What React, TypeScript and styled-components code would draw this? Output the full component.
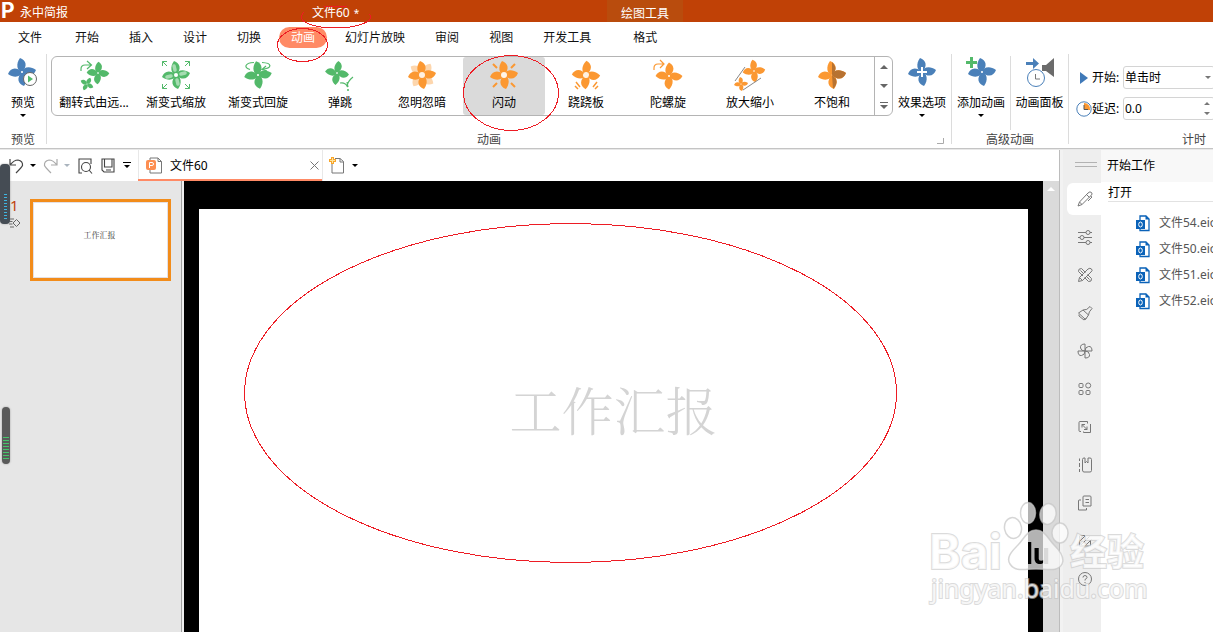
import React from "react";
import styled, { createGlobalStyle } from "styled-components";

const GlobalStyle = createGlobalStyle`
  * { box-sizing: border-box; }
  body {
    margin: 0;
    background: #fff;
    color: #000;
    font: 12px/16px "Noto Sans", "Noto Sans CJK SC", sans-serif;
  }
  button, input, select {
    font: inherit;
    color: inherit;
    border: 0;
    padding: 0;
    margin: 0;
    background: none;
  }
  a { color: inherit; text-decoration: none; }
  svg { display: block; flex: none; }
`;

const Page = styled.div`
  position: relative;
  display: flex;
  flex-direction: column;
  min-height: 100vh;
  overflow: hidden;
  white-space: nowrap;
`;

/* ---------- title bar ---------- */

const TitleBar = styled.header`
  display: flex;
  height: 22px;
  background: #c04106;
  color: #fff;
`;
const Brand = styled.div`
  display: flex;
  flex: none;
  width: 312px;
  padding-left: 1px;
  gap: 4px;
  line-height: 25px;
`;
const BrandMark = styled.span`
  width: 15px;
  font: 700 21px/22px Inter, sans-serif;
`;
const DocName = styled.div`
  flex: none;
  width: 295px;
  line-height: 25px;
`;
const Dirty = styled.span`
  margin-left: 4px;
  font-size: 10px;
`;
const ContextTab = styled.div`
  width: 76px;
  line-height: 27px;
  text-align: center;
  background: #b94c0d;
`;

/* ---------- menu ---------- */

const Menu = styled.nav`
  display: flex;
  height: 32px;
  padding: 5px 0 0 6px;
`;
const MenuItem = styled.button<{ $active?: boolean; $gap?: number }>`
  flex: none;
  height: 21px;
  padding: 0 12px;
  margin-right: ${(p) => p.$gap ?? 6}px;
  border-radius: 11px;
  background: ${(p) => (p.$active ? "#ff8a65" : "transparent")};
  color: ${(p) => (p.$active ? "#fff" : "#111")};
`;

/* ---------- ribbon ---------- */

const Ribbon = styled.section`
  display: flex;
  align-items: flex-start;
  height: 96px;
  border-bottom: 1px solid #e8e8e8;
  box-shadow: inset 0 -1px #c4c4c4;
`;
const Group = styled.div<{ $width?: number }>`
  flex: none;
  width: ${(p) => (p.$width ? `${p.$width}px` : "auto")};
`;
const GroupBody = styled.div<{ $left?: number }>`
  display: flex;
  height: 78px;
  padding: 2px 0 0 ${(p) => p.$left ?? 0}px;
`;
const GroupLabel = styled.div`
  display: flex;
  text-align: center;
  color: #444;
  span { flex: 1; }
`;
const Launcher = styled.button`
  width: 20px;
  height: 16px;
  padding-left: 6px;
`;
const Divider = styled.div<{ $height?: number }>`
  flex: none;
  width: 1px;
  height: ${(p) => p.$height ?? 90}px;
  background: #dcdcdc;
`;
const BigButton = styled.button<{ $width?: number }>`
  display: flex;
  flex-direction: column;
  align-items: center;
  flex: none;
  width: ${(p) => p.$width ?? 58}px;
  height: 66px;
  svg + span { margin-top: 7px; }
  span + svg { margin-top: 3px; }
`;
const Gallery = styled.div`
  display: flex;
  flex: none;
  height: 60px;
  padding-left: 1px;
  border: 1px solid #b4b4b4;
  border-radius: 6px;
`;
const GalleryItem = styled.button<{ $active?: boolean }>`
  display: flex;
  flex-direction: column;
  align-items: center;
  gap: 4px;
  width: 82px;
  height: 58px;
  padding-top: 2px;
  border-radius: 3px;
  background: ${(p) => (p.$active ? "#dadada" : "transparent")};
`;
const GalleryScroll = styled.div`
  display: flex;
  flex-direction: column;
  width: 18px;
  margin-left: 1px;
  border-left: 1px solid #b4b4b4;
  button {
    display: flex;
    flex: 1;
    align-items: center;
    justify-content: center;
  }
`;
const Timing = styled.div`
  display: flex;
  flex-direction: column;
  gap: 8px;
  padding: 10px 0 0 6px;
`;
const TimingRow = styled.div`
  display: flex;
  align-items: center;
  height: 23px;
  label { width: 31px; }
`;
const TimingIcon = styled.span`
  display: flex;
  justify-content: center;
  width: 17px;
`;
const FieldBox = styled.span`
  display: flex;
  align-items: center;
  width: 92px;
  height: 23px;
  padding: 0 3px 0 1px;
  border: 1px solid #d4d4d4;
  border-radius: 3px;
  select, input {
    flex: 1;
    min-width: 0;
    height: 20px;
    appearance: none;
    outline: none;
  }
`;

/* ---------- work area ---------- */

const Body = styled.div`
  display: flex;
  flex: 1;
`;
const Editor = styled.main`
  display: flex;
  flex-direction: column;
  flex: 1;
  min-width: 0;
`;
const QuickBar = styled.div`
  display: flex;
  align-items: center;
  height: 31px;
  padding-left: 8px;
`;
const IconButton = styled.button<{ $width?: number }>`
  display: flex;
  align-items: center;
  justify-content: center;
  flex: none;
  width: ${(p) => p.$width ?? 16}px;
  height: 24px;
`;
const QuickTools = styled.div`
  display: flex;
  align-items: center;
  width: 130px;
  gap: 3px;
`;
const DocTab = styled.div`
  display: flex;
  align-items: center;
  flex: none;
  width: 184px;
  height: 31px;
  padding: 2px 0 0 8px;
  border-bottom: 2px solid #ff8a65;
  box-shadow: inset 1px 0 #e8e8e8, 1px 0 #e8e8e8;
  svg { margin-right: 7px; }
  span { flex: 1; }
  button svg { margin: 0; }
`;
const Work = styled.div`
  display: flex;
  flex: 1;
`;
const Thumbs = styled.div`
  display: flex;
  flex: none;
  align-items: flex-start;
  width: 184px;
  padding: 18px 0 0 9px;
  background: #e6e6e6;
  box-shadow: inset -2px 0 #efefef, inset -3px 0 #a0a0a0;
`;
const ThumbInfo = styled.div`
  width: 21px;
  color: #c0430a;
  font-size: 15px;
  line-height: 12px;
  svg { margin-top: 7px; }
  span { padding-left: 1px; }
`;
const Thumb = styled.button`
  width: 141px;
  height: 82px;
  padding: 0 2px 10px 0;
  border: 3px solid #f28c1a;
  background: #fff;
  box-shadow: inset 0 0 0 1px #e4e0e4;
  color: #333;
  font: 8px/12px "Noto Serif CJK SC", "Noto Sans CJK SC", serif;
`;
const Stage = styled.div`
  display: flex;
  flex: 1;
  min-width: 0;
  padding: 28px 15px 0;
  background: #000;
`;
const Slide = styled.section`
  flex: 1;
  padding-top: 170px;
  background: #fff;
  text-align: center;
`;
const SlideTitle = styled.h1`
  margin: 0;
  color: #d4d4d4;
  font: 300 52px/60px "Noto Serif CJK SC", "Noto Sans CJK SC", serif;
`;
const ScrollTrack = styled.div`
  flex: none;
  width: 16px;
  padding: 6px 0 0 4px;
  background: #dadada;
`;

/* ---------- side pane ---------- */

const Side = styled.aside`
  display: flex;
  flex: none;
  width: 154px;
  border-left: 1px solid #bcbcbc;
`;
const ToolStrip = styled.div`
  display: flex;
  flex-direction: column;
  align-items: flex-end;
  gap: 6px;
  flex: none;
  width: 41px;
  background: #eee;
  border-left: 3px solid #f2f2f2;
`;
const Grip = styled.div`
  width: 22px;
  height: 5px;
  margin: 12px 4px 10px 0;
  border: solid #b2b2b2;
  border-width: 1px 0;
`;
const ToolTile = styled.button<{ $active?: boolean }>`
  display: flex;
  align-items: center;
  justify-content: center;
  width: 34px;
  height: 32px;
  padding-left: 2px;
  border-radius: 6px 0 0 6px;
  background: ${(p) => (p.$active ? "#fff" : "transparent")};
`;
const Panel = styled.div`
  flex: 1;
  min-width: 0;
  overflow: hidden;
`;
const PanelHead = styled.h2`
  margin: 0;
  height: 32px;
  padding: 8px 0 0 6px;
  background: #f8f8f8;
  font: inherit;
`;
const PanelSub = styled.h3`
  margin: 0 0 8px 7px;
  height: 20px;
  padding-top: 3px;
  border-bottom: 1px solid #e2e2e2;
  font: inherit;
`;
const FileLink = styled.a`
  display: flex;
  align-items: center;
  gap: 9px;
  height: 26px;
  padding-left: 35px;
  color: #555;
`;

/* ---------- overlays ---------- */

const Mark = styled.svg`
  position: absolute;
  inset: 0;
  pointer-events: none;
`;
const Meter = styled.div<{ $top: number; $left: number; $width: number; $height: number; $color: string; $lit: string }>`
  position: absolute;
  top: ${(p) => p.$top}px;
  left: ${(p) => p.$left}px;
  width: ${(p) => p.$width}px;
  height: ${(p) => p.$height}px;
  padding: 30px 1px 3px;
  border-radius: 4px;
  background: ${(p) => p.$color};
  box-shadow: 0 0 2px #999;
  &::after {
    content: "";
    display: block;
    width: ${(p) => (p.$width > 8 ? 3 : 6)}px;
    height: 100%;
    margin: 0 auto;
    background: repeating-linear-gradient(${(p) => p.$lit} 0 1px, transparent 1px 3px);
  }
`;
const Watermark = styled.svg`
  position: absolute;
  left: 925px;
  top: 500px;
  pointer-events: none;
`;

/* ---------- icons ---------- */

const PETAL = "M0 0C-5-1-6.500-8-2-14C4-12 6-6 0 0Z";
const GREEN = "#53b96a";
const ORANGE = "#fb9832";
const BLUE = "#4a80b9";

function Flower({ x = 16, y = 16, s = 1, color, turn = 0, opacity = 1, hub = 1, hubColor = "#fff" }: {
  x?: number; y?: number; s?: number; color: string; turn?: number; opacity?: number; hub?: number; hubColor?: string;
}) {
  return (
    <g transform={`translate(${x} ${y}) rotate(${turn}) scale(${s})`}>
      {[0, 90, 180, 270].map((a) => (
        <path key={a} d={PETAL} fill={color} fillOpacity={opacity} transform={`rotate(${a})`} />
      ))}
      <circle r={hub} fill={hubColor} />
    </g>
  );
}

const Art = ({ children }: { children: React.ReactNode }) => (
  <svg width="32" height="32" viewBox="0 0 32 32" fill="none" aria-hidden="true">{children}</svg>
);

const effects: { name: string; art: React.ReactNode }[] = [
  {
    name: "翻转式由远...",
    art: (<>
      <Flower x={20} y={14} s={0.8} color={GREEN} turn={10} />
      <Flower x={9} y={25} s={0.5} color={GREEN} turn={35} />
      <path d="M3 12V10Q3 6 7 6H13M9 2L13.500 6L9 10" stroke={GREEN} strokeWidth="1.200" />
    </>),
  },
  {
    name: "渐变式缩放",
    art: (<>
      <Flower color={GREEN} hub={2} />
      <g transform="translate(16 16)" stroke="#a5dcb1" strokeWidth="3.500" strokeLinecap="round">
        <path d="M-1-5L-2-9M5-1L9-2M1 5L2 9M-5 1L-9 2" />
      </g>
      <path d="M7 2.500H2.500V7M2.500 2.500L7 7M25 2.500H29.500V7M29.500 2.500L25 7M7 29.500H2.500V25M2.500 29.500L7 25M25 29.500H29.500V25M29.500 29.500L25 25" stroke={GREEN} />
    </>),
  },
  {
    name: "渐变式回旋",
    art: (<>
      <path d="M12 3.500C2 4 2 9 8 10.500M20 3.500C30 4 31 9 20 10.500M24 7L20 10.500L25 12" stroke={GREEN} strokeWidth="1.200" />
      <Flower y={16} s={0.98} color={GREEN} />
    </>),
  },
  {
    name: "弹跳",
    art: (<>
      <Flower x={13} y={14} s={0.85} color={GREEN} turn={15} />
      <path d="M16 24Q21 23 23 27Q24 22 29 18M23 23L24 28" stroke={GREEN} strokeWidth="1.200" />
      <circle cx="24" cy="31" r="1" fill={GREEN} />
    </>),
  },
  {
    name: "忽明忽暗",
    art: (<>
      <Flower color={ORANGE} turn={45} opacity={0.4} />
      <Flower color={ORANGE} hub={3} hubColor="#fff1e2" />
    </>),
  },
  {
    name: "闪动",
    art: (<>
      <Flower color={ORANGE} hub={3} hubColor="#fff4e8" />
      <path d="M5 5L9 9M27 5L23 9M5 28L9 24M27 28L23 24" stroke={ORANGE} strokeWidth="2" />
    </>),
  },
  {
    name: "跷跷板",
    art: (<>
      <Flower color={ORANGE} turn={10} hub={3} hubColor="#fff1e2" />
      <path d="M6 23L10 28M5 27L8 30M27 23L23 28M28 27L25 30" stroke={ORANGE} strokeWidth="1.500" />
    </>),
  },
  {
    name: "陀螺旋",
    art: (<>
      <Flower x={17} y={17} s={0.95} color={ORANGE} turn={8} />
      <path d="M2 11V9Q2 5 6 5H11M8 1L12 5L8 9" stroke={ORANGE} strokeWidth="1.200" />
    </>),
  },
  {
    name: "放大缩小",
    art: (<>
      <Flower x={20} y={12} s={0.8} color={ORANGE} />
      <Flower x={7} y={25} s={0.5} color={ORANGE} />
      <path d="M1 22L11 8M9 31L27 19" stroke="#888" />
    </>),
  },
  {
    name: "不饱和",
    art: (<>
      <Flower color={ORANGE} hub={0} />
      <g fill="#b77231">
        <path d={PETAL} transform="translate(16 16) rotate(90)" />
        <path d="M16 16V3Q21 8 19 12Q18 14 16 16ZM16 16L17 30Q22 25 20 20Z" />
      </g>
    </>),
  },
];

const Caret = ({ color = "#000", up = false, w = 6 }: { color?: string; up?: boolean; w?: number }) => (
  <svg width={w} height={w / 2} viewBox="0 0 6 3" aria-hidden="true">
    <path d={up ? "M0 3L3 0L6 3Z" : "M0 0H6L3 3Z"} fill={color} />
  </svg>
);

const tools: { name: string; art: React.ReactNode }[] = [
  { name: "编辑", art: <path d="M1 15L2.500 11L11 2Q13 0 14.500 1.500T14 4.500L5 13.500ZM2.500 11L5 13.500M9.500 3.500L12.500 6.500M13.500 5L15 6L11 10" /> },
  { name: "设置", art: <><path d="M1 3.500H9M13 3.500H15M1 8.500H3M7 8.500H15M1 13.500H9M13 13.500H15" /><circle cx="11" cy="3.500" r="2" /><circle cx="5" cy="8.500" r="2" /><circle cx="11" cy="13.500" r="2" /></> },
  { name: "工具", art: <><path d="M1.500 14.500L2.500 10.500L11 2Q13 .5 14.500 2T14 5L5.500 13.500ZM2.500 10.500L5.500 13.500" /><path d="M6 9L1.500 4.500Q1 1.500 4.500 1.500L8.500 5.500M10.500 7.500L14.500 11.500Q15 15 11.500 14.500L7.500 10.500M3.500 3.500L6 6M10 10L12.500 12.500" /></> },
  { name: "格式刷", art: <path d="M1.500 8L6 5Q10 5.500 13 1.500L15 3.500Q11.500 7 11.500 10L8.500 14.500L1.500 8ZM6 5L11.500 10M2 9.500V11L7 15L9.500 13" /> },
  { name: "动画", art: <path d="M8 8V1Q3 1 3.500 5Q4 8 8 8ZM8 8H15Q15 3 11.500 3.500Q8 4 8 8ZM8 8V15Q13 15 12.500 11.500Q12 8 8 8ZM8 8H1Q1 13 4.500 12.500Q8 12 8 8Z" /> },
  { name: "形状", art: <><rect x="2" y="2.500" width="4" height="4" rx="1" /><circle cx="11.200" cy="4.500" r="2.500" /><rect x="2" y="9.500" width="4" height="4" rx="1" /><rect x="9" y="9.500" width="4" height="4" rx="1" /></> },
  { name: "切换", art: <path d="M4 12.500H3Q2 12.500 2 11.500V3.500Q2 2.500 3 2.500H10.500V4.500M13.500 5V13.500H6.500V12.500M5 5.500L10 10.500M5 8.500V5.500H8M10 7.500V10.500H7" /> },
  { name: "书签", art: <path d="M2.500 1.500V4M2.500 6V10M2.500 12V15M5.500 13V2.500Q5.500 1 7 1H8V6L9.500 4.500L11 6V1H13Q14.500 1 14.500 2.500V13.500Q14.500 15 13 15H7Q5.500 15 5.500 13" /> },
  { name: "复制", art: <path d="M7 1H13Q14 1 14 2V11H6V2Q6 1 7 1ZM8.500 4.500H12M8.500 7.500H12M4 5H2Q1.500 5 1.500 6V15H9.500V13" /> },
  { name: "图片", art: <path d="M8 2.500H2.500V13H13.500V8M4 12L13 3M8 13L15 6M3 8L8 3" /> },
  { name: "帮助", art: <><circle cx="8" cy="8" r="6.500" /><path d="M6 6.500Q6 4.500 8 4.500T10 6.500Q10 7.500 8 8.500V9.500M8 11V12" /></> },
];

const FileIcon = () => (
  <svg width="14" height="17" viewBox="0 0 14 17" fill="none" aria-hidden="true">
    <path d="M4 5V1H10L13 4V15.500H4V13" stroke="#0a62b8" strokeWidth="1.300" />
    <path d="M9.500 .5V4.500H13.500Z" fill="#0a62b8" />
    <rect y="5" width="9" height="9" fill="#0a62b8" />
    <ellipse cx="4.500" cy="9.500" rx="1.800" ry="2.500" stroke="#fff" />
  </svg>
);

const Redo = ({ flip = false, color }: { flip?: boolean; color: string }) => (
  <svg width="15" height="16" viewBox="0 0 15 16" fill="none" stroke={color} strokeWidth="1.200" aria-hidden="true">
    <g transform={flip ? "translate(15 0) scale(-1 1)" : undefined}>
      <path d="M14 1V7H8M13.500 6.500Q10 2 6 2Q1 3 1.500 7.500Q2 9 8 15" />
    </g>
  </svg>
);

/* ---------- page ---------- */

const menuItems: { name: string; gap?: number; active?: boolean }[] = [
  { name: "文件", gap: 9 }, { name: "开始" }, { name: "插入" }, { name: "设计" }, { name: "切换" },
  { name: "动画", active: true }, { name: "幻灯片放映" }, { name: "审阅" }, { name: "视图" },
  { name: "开发工具", gap: 18 }, { name: "格式" },
];
const files = ["文件54.eio", "文件50.eio", "文件51.eio", "文件52.eio"];

export default function App() {
  return (
    <Page>
      <GlobalStyle />
      <TitleBar>
        <Brand><BrandMark>P</BrandMark><span>永中简报</span></Brand>
        <DocName>文件60<Dirty>*</Dirty></DocName>
        <ContextTab>绘图工具</ContextTab>
      </TitleBar>

      <Menu>
        {menuItems.map((m) => (
          <MenuItem key={m.name} $active={m.active} $gap={m.gap}>{m.name}</MenuItem>
        ))}
      </Menu>

      <Ribbon>
        <Group $width={46}>
          <GroupBody>
            <BigButton $width={46}>
              <Art>
                <Flower x={15} color={BLUE} />
                <circle cx="23" cy="23" r="6.500" fill="#fff" stroke="#666" />
                <path d="M21 19.500L26 23L21 26.500Z" fill={GREEN} />
              </Art>
              <span>预览</span><Caret />
            </BigButton>
          </GroupBody>
          <GroupLabel><span>预览</span></GroupLabel>
        </Group>
        <Divider />
        <Group>
          <GroupBody $left={4}>
            <Gallery>
              {effects.map((e) => (
                <GalleryItem key={e.name} $active={e.name === "闪动"}>
                  <Art>{e.art}</Art>
                  <span>{e.name}</span>
                </GalleryItem>
              ))}
              <GalleryScroll>
                <button aria-label="向上"><Caret up w={8} color="#666" /></button>
                <button aria-label="向下"><Caret w={8} color="#666" /></button>
                <button aria-label="更多">
                  <svg width="8" height="7" viewBox="0 0 8 7"><path d="M0 0H8V1H0ZM0 3H8L4 7Z" fill="#666" /></svg>
                </button>
              </GalleryScroll>
            </Gallery>
            <BigButton>
              <Art>
                <Flower color={BLUE} />
                <path d="M16 11V21M11 16H21" stroke="#fff" strokeWidth="2" />
              </Art>
              <span>效果选项</span><Caret />
            </BigButton>
          </GroupBody>
          <GroupLabel>
            <span>动画</span>
            <Launcher aria-label="动画设置">
              <svg width="7" height="7" viewBox="0 0 7 7"><path d="M0 6.500H6.500V1" fill="none" stroke="#aaa" /></svg>
            </Launcher>
          </GroupLabel>
        </Group>
        <Divider />
        <Group>
          <GroupBody>
            <BigButton>
              <Art>
                <Flower x={17} color={BLUE} />
                <path d="M6.500 1V12M1 6.500H12" stroke={GREEN} strokeWidth="3" />
              </Art>
              <span>添加动画</span><Caret />
            </BigButton>
            <Divider $height={74} />
            <BigButton $width={57}>
              <Art>
                <path d="M2 6H9V2L15 7.500L9 13V9H2Z" fill={BLUE} />
                <path d="M18 9H22L30 2V21L22 15H18Z" fill="#6b6b6b" />
                <circle cx="12" cy="22" r="8.500" fill="#fff" stroke={BLUE} />
                <path d="M11.500 18V23H16" stroke="#777" />
              </Art>
              <span>动画面板</span>
            </BigButton>
          </GroupBody>
          <GroupLabel><span>高级动画</span></GroupLabel>
        </Group>
        <Divider />
        <Group $width={250}>
          <GroupBody>
            <Timing>
              <TimingRow>
                <TimingIcon><svg width="8" height="12" viewBox="0 0 8 12"><path d="M0 0L8 6L0 12Z" fill="#3f79b8" /></svg></TimingIcon>
                <label htmlFor="start">开始:</label>
                <FieldBox>
                  <select id="start" defaultValue="click"><option value="click">单击时</option></select>
                  <Caret color="#777" />
                </FieldBox>
              </TimingRow>
              <TimingRow>
                <TimingIcon>
                  <svg width="16" height="16" viewBox="0 0 16 16" fill="none">
                    <circle cx="8" cy="8" r="7.200" fill="#fff" stroke={BLUE} />
                    <path d="M8 8V2A6 6 0 0 1 14 9H8Z" fill={ORANGE} />
                    <path d="M8 4V8.500H12" stroke="#555" />
                  </svg>
                </TimingIcon>
                <label htmlFor="delay">延迟:</label>
                <FieldBox>
                  <input id="delay" defaultValue="0.0" />
                  <svg width="8" height="15" viewBox="0 0 8 15"><path d="M1 4L4 1L7 4ZM1 11H7L4 14Z" fill="#777" /></svg>
                </FieldBox>
              </TimingRow>
            </Timing>
          </GroupBody>
          <GroupLabel><span>计时</span></GroupLabel>
        </Group>
      </Ribbon>

      <Body>
        <Editor>
          <QuickBar>
            <QuickTools>
              <IconButton aria-label="撤销"><Redo flip color="#444" /></IconButton>
              <IconButton aria-label="撤销列表" $width={12}><Caret /></IconButton>
              <IconButton aria-label="恢复" $width={16}><Redo color="#aaa" /></IconButton>
              <IconButton aria-label="恢复列表" $width={12}><Caret color="#aab4be" /></IconButton>
              <IconButton aria-label="打印预览" $width={18}>
                <svg width="15" height="16" viewBox="0 0 15 16" fill="none" stroke="#444" strokeWidth="1.100">
                  <path d="M4 15H1V1H13V6" /><circle cx="8" cy="9" r="4.500" /><path d="M11 12L14 15.500" />
                </svg>
              </IconButton>
              <IconButton aria-label="保存" $width={22}>
                <svg width="14" height="15" viewBox="0 0 14 15" fill="none" stroke="#444" strokeWidth="1.100">
                  <path d="M1 1H13V14H3L1 12ZM3.500 1V9H11V1M5 12H10" />
                </svg>
              </IconButton>
              <IconButton aria-label="更多命令" $width={10}>
                <svg width="8" height="7" viewBox="0 0 8 7"><path d="M0 0H8V1H0ZM1 3H7L4 6Z" fill="#000" /></svg>
              </IconButton>
            </QuickTools>
            <DocTab>
              <svg width="17" height="17" viewBox="0 0 17 17" fill="none">
                <path d="M4 4V1H12L15.500 4.500V16H4V13M12 1V4.500H15.500" stroke="#777" />
                <rect x="0" y="3" width="10" height="10" rx="2" fill="#fd8e51" />
                <path d="M3.500 11V5.500H6Q7.500 5.500 7.500 7T6 8.500H3.500" stroke="#fff" />
              </svg>
              <span>文件60</span>
              <IconButton aria-label="关闭">
                <svg width="9" height="9" viewBox="0 0 9 9"><path d="M0.500 0.500L8.500 8.500M8.500 0.500L0.500 8.500" stroke="#777" /></svg>
              </IconButton>
            </DocTab>
            <IconButton aria-label="新建" $width={30}>
              <svg width="16" height="17" viewBox="0 0 16 17" fill="none">
                <path d="M3 7V16H14.500V4.500L11 1.500H6M11 1.500V5H14.500" stroke="#777" />
                <path d="M3.500 0V7M0 3.500H7" stroke="#f7a52b" strokeWidth="3" />
                <path d="M3.500 1V6M1 3.500H6" stroke="#ffe39a" />
              </svg>
            </IconButton>
            <IconButton aria-label="新建列表" $width={6}><Caret /></IconButton>
          </QuickBar>
          <Work>
            <Thumbs>
              <ThumbInfo>
                <span>1</span>
                <svg width="12" height="10" viewBox="0 0 12 10" fill="none" stroke="#666">
                  <path d="M7.500 1.500L11 5L7.500 8.500L4 5ZM1 1H5M0 3.500H3.500M0 6H3.500M1 9H5" />
                </svg>
              </ThumbInfo>
              <Thumb>工作汇报</Thumb>
            </Thumbs>
            <Stage><Slide><SlideTitle>工作汇报</SlideTitle></Slide></Stage>
            <ScrollTrack><Caret up color="#fff" w={8} /></ScrollTrack>
          </Work>
        </Editor>
        <Side>
          <ToolStrip>
            <Grip />
            {tools.map((t, i) => (
              <ToolTile key={t.name} $active={i === 0} aria-label={t.name}>
                <svg width="16" height="16" viewBox="0 0 16 16" fill="none" stroke="#777">{t.art}</svg>
              </ToolTile>
            ))}
          </ToolStrip>
          <Panel>
            <PanelHead>开始工作</PanelHead>
            <PanelSub>打开</PanelSub>
            {files.map((f) => (
              <FileLink key={f} href="#"><FileIcon /><span>{f}</span></FileLink>
            ))}
          </Panel>
        </Side>
      </Body>

      <Meter $top={164} $left={0} $width={10} $height={60} $color="#454c54" $lit="#3fb5e0" />
      <Meter $top={407} $left={2} $width={8} $height={57} $color="#5a5a5a" $lit="#45c46b" />
      <Mark width="900" height="570" viewBox="0 0 900 570" fill="none" stroke="#ed1c24" shapeRendering="crispEdges" aria-hidden="true">
        <path d="M304 12C294 22 315 28 336 28C357 28 377 21 369 14M324 6.500H347" />
        <ellipse cx="302.500" cy="45" rx="25" ry="16.500" />
        <ellipse cx="511" cy="93" rx="47.500" ry="37.500" />
        <ellipse cx="570.500" cy="393" rx="326" ry="169.500" />
      </Mark>
      <Watermark width="230" height="112" viewBox="0 0 230 112">
        <defs>
          <mask id="paw">
            <rect width="230" height="112" fill="#fff" />
            <text x="91" y="64" fontFamily="Roboto, sans-serif" fontWeight="700" fontSize="30" fill="#000">du</text>
          </mask>
        </defs>
        <g fill="#fff" fillOpacity="0.7" stroke="#c4c4c4" strokeOpacity="0.7" strokeWidth="1.500">
          <ellipse cx="88" cy="28" rx="8.500" ry="10.500" transform="rotate(-10 88 28)" />
          <ellipse cx="103" cy="13" rx="7.500" ry="10.500" />
          <ellipse cx="123" cy="14" rx="8" ry="10.500" transform="rotate(10 123 14)" />
          <ellipse cx="135" cy="33" rx="8" ry="10" />
          <path mask="url(#paw)" d="M111 30C120 30 123 39 129 45C136 52 140 58 137 64C133 72 123 69 111 69S90 72 85 64C81 58 86 52 93 45C99 39 102 30 111 30Z" />
        </g>
        <g fill="#fff" fillOpacity="0.75" stroke="#c4c4c4" strokeOpacity="0.6" strokeWidth="2" paintOrder="stroke">
          <text x="4" y="69" fontFamily="Inter, sans-serif" fontWeight="700" fontSize="48">Bai</text>
          <text x="145" y="66" fontFamily="Noto Sans CJK SC, sans-serif" fontWeight="700" fontSize="37">经验</text>
          <text x="6" y="98" fontFamily="Noto Sans, sans-serif" fontSize="25">jingyan.baidu.com</text>
        </g>
      </Watermark>
    </Page>
  );
}
